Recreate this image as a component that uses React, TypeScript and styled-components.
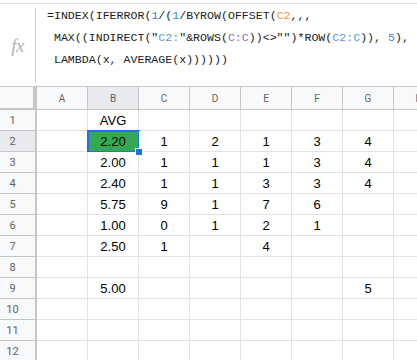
import React from "react";
import styled, { createGlobalStyle } from "styled-components";

const GlobalStyle = createGlobalStyle`
  html, body {
    margin: 0;
    padding: 0;
    background: #ffffff;
    overflow: hidden;
  }
  * { box-sizing: border-box; }
`;

const Page = styled.div`
  width: 417px;
  height: 360px;
  overflow: hidden;
  background: #fff;
  font-family: "Liberation Sans", Arial, sans-serif;
`;

/* ---------- formula bar ---------- */
const FormulaBar = styled.div`
  margin-top: 3px;
  border-top: 1px solid #e1e3e1;
  height: 83px;
  display: flex;
`;

const FxBox = styled.div`
  width: 35px;
  display: flex;
  align-items: center;
  justify-content: center;
  padding-top: 2px;
  font-family: "Liberation Serif", "Times New Roman", serif;
  font-style: italic;
  font-size: 19px;
  color: #b4b4b4;
  letter-spacing: -0.5px;
`;

const Divider = styled.div`
  width: 1px;
  margin: 4px 0;
  background: #c7c7c7;
`;

const FormulaText = styled.div`
  padding: 1px 0 0 11px;
  font-family: "Liberation Mono", "DejaVu Sans Mono", monospace;
  font-size: 11.6px;
  line-height: 22px;
  color: #202124;
  white-space: pre;
`;

const Tok = styled.span<{ $c: string }>`
  color: ${(p) => p.$c};
`;

/* ---------- grid ---------- */
const Grid = styled.div`
  border-top: 1px solid #c4c7c5;
  display: flex;
  flex-direction: column;
`;

const Row = styled.div`
  display: flex;
  flex: none;
`;

const Corner = styled.div`
  width: 37px;
  height: 23px;
  flex: none;
  background: #f8f9fa;
  border-right: 4px solid #c4c7c5;
  border-bottom: 2px solid #c4c7c5;
`;

const ColHead = styled.div<{ $sel?: boolean }>`
  width: 51px;
  height: 23px;
  flex: none;
  display: flex;
  align-items: center;
  justify-content: center;
  background: ${(p) => (p.$sel ? "#e8eaed" : "#f8f9fa")};
  border-right: 1px solid #c4c7c5;
  border-bottom: 1px solid #c4c7c5;
  font-family: Roboto, "Liberation Sans", Arial, sans-serif;
  font-size: 10px;
  color: #5f6368;
`;

const RowHead = styled.div<{ $sel?: boolean }>`
  width: 37px;
  height: 21px;
  flex: none;
  display: flex;
  align-items: center;
  justify-content: center;
  padding-right: 10px;
  background: ${(p) => (p.$sel ? "#e8eaed" : "#f8f9fa")};
  border-right: 2px solid #c4c7c5;
  border-bottom: 1px solid #c4c7c5;
  font-family: Roboto, "Liberation Sans", Arial, sans-serif;
  font-size: 11px;
  color: #5f6368;
`;

const Cell = styled.div<{ $fill?: string }>`
  position: relative;
  width: 51px;
  height: 21px;
  flex: none;
  display: flex;
  align-items: center;
  justify-content: center;
  padding-top: 1px;
  background: ${(p) => p.$fill ?? "#ffffff"};
  border-right: 1px solid #e2e2e3;
  border-bottom: 1px solid #e2e2e3;
  font-size: 13px;
  color: #000;
`;

const Selection = styled.div`
  position: absolute;
  left: -1px;
  top: -1px;
  right: -2px;
  bottom: -2px;
  border: 2px solid #1a73e8;
  pointer-events: none;
`;

const Handle = styled.div`
  position: absolute;
  right: -5px;
  bottom: -5px;
  width: 8px;
  height: 8px;
  background: #1a73e8;
  border: 1px solid #ffffff;
  z-index: 2;
`;

const cols = ["A", "B", "C", "D", "E", "F", "G", "H"];

const data: string[][] = [
  ["", "AVG"],
  ["", "2.20", "1", "2", "1", "3", "4"],
  ["", "2.00", "1", "1", "1", "3", "4"],
  ["", "2.40", "1", "1", "3", "3", "4"],
  ["", "5.75", "9", "1", "7", "6"],
  ["", "1.00", "0", "1", "2", "1"],
  ["", "2.50", "1", "", "4"],
  [],
  ["", "5.00", "", "", "", "", "5"],
  [],
  [],
  [],
];

const NUM = "#3d7fc9";
const ORANGE = "#ef9a3a";
const PURPLE = "#8e6bbf";
const BLUE = "#5a9bd5";

export default function App() {
  return (
    <Page>
      <GlobalStyle />
      <FormulaBar>
        <FxBox>fx</FxBox>
        <Divider />
        <FormulaText>
          {"=INDEX(IFERROR("}
          <Tok $c={NUM}>1</Tok>
          {"/("}
          <Tok $c={NUM}>1</Tok>
          {"/BYROW(OFFSET("}
          <Tok $c={ORANGE}>C2</Tok>
          {",,,\n MAX((INDIRECT(\""}
          <Tok $c={BLUE}>C2:</Tok>
          {"\"&ROWS("}
          <Tok $c={PURPLE}>C:C</Tok>
          {"))<>\"\")*ROW("}
          <Tok $c={BLUE}>C2:C</Tok>
          {")), "}
          <Tok $c={NUM}>5</Tok>
          {"),\n LAMBDA(x, AVERAGE(x))))))"}
        </FormulaText>
      </FormulaBar>
      <Grid>
        <Row>
          <Corner />
          {cols.map((c) => (
            <ColHead key={c} $sel={c === "B"}>
              {c}
            </ColHead>
          ))}
        </Row>
        {data.map((row, r) => (
          <Row key={r}>
            <RowHead $sel={r === 1}>{r + 1}</RowHead>
            {cols.map((c, ci) => {
              const sel = r === 1 && ci === 1;
              return (
                <Cell key={c} $fill={sel ? "#34a853" : undefined}>
                  {row[ci] ?? ""}
                  {sel && (
                    <>
                      <Selection />
                      <Handle />
                    </>
                  )}
                </Cell>
              );
            })}
          </Row>
        ))}
      </Grid>
    </Page>
  );
}
